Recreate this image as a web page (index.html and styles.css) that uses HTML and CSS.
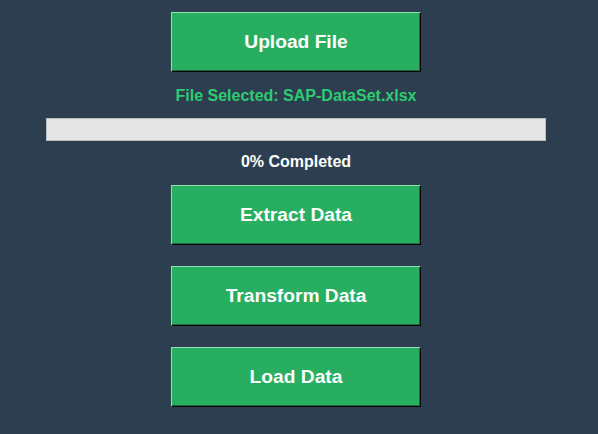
FILE: index.html
```html
<!DOCTYPE html>
<html>
<head>
<meta charset="utf-8">
<link rel="stylesheet" href="styles.css">
</head>
<body>
<div class="app">
  <button class="btn btn-first">Upload File</button>
  <div class="status">File Selected: SAP-DataSet.xlsx</div>
  <div class="progress"><div class="progress-fill" style="width:0%"></div></div>
  <div class="percent">0% Completed</div>
  <button class="btn btn-extract">Extract Data</button>
  <button class="btn btn-next">Transform Data</button>
  <button class="btn btn-next">Load Data</button>
</div>
</body>
</html>
```
FILE: styles.css
```css
html, body {
  margin: 0;
  padding: 0;
  background: #2c3e50;
  width: 598px;
  height: 434px;
  overflow: hidden;
}
.app {
  width: 592px;
  display: flex;
  flex-direction: column;
  align-items: center;
  font-family: "Liberation Sans", Arial, sans-serif;
  font-weight: bold;
}
.btn {
  box-sizing: border-box;
  width: 250px;
  height: 60px;
  background: #27ae60;
  color: #ffffff;
  font-family: "Liberation Sans", Arial, sans-serif;
  font-weight: bold;
  font-size: 19.2px;
  border-style: solid;
  border-width: 1px;
  border-color: #8fe3b0 #000000 #000000 #8fe3b0;
  box-shadow: inset -1px -1px 0 #1c6b3d;
  padding: 0;
  margin: 0;
}
.btn-first { margin-top: 12px; }
.btn-extract { margin-top: 13px; }
.btn-next { margin-top: 21px; }
.status {
  margin-top: 14px;
  height: 20px;
  line-height: 20px;
  font-size: 16px;
  color: #2ecc71;
}
.progress {
  box-sizing: border-box;
  margin-top: 12px;
  width: 500px;
  height: 23px;
  background: #e6e6e6;
  border: 1px solid #bcbcbc;
}
.progress-fill {
  height: 100%;
  background: #27ae60;
}
.percent {
  margin-top: 11px;
  height: 20px;
  line-height: 20px;
  font-size: 16px;
  color: #ffffff;
}
```
